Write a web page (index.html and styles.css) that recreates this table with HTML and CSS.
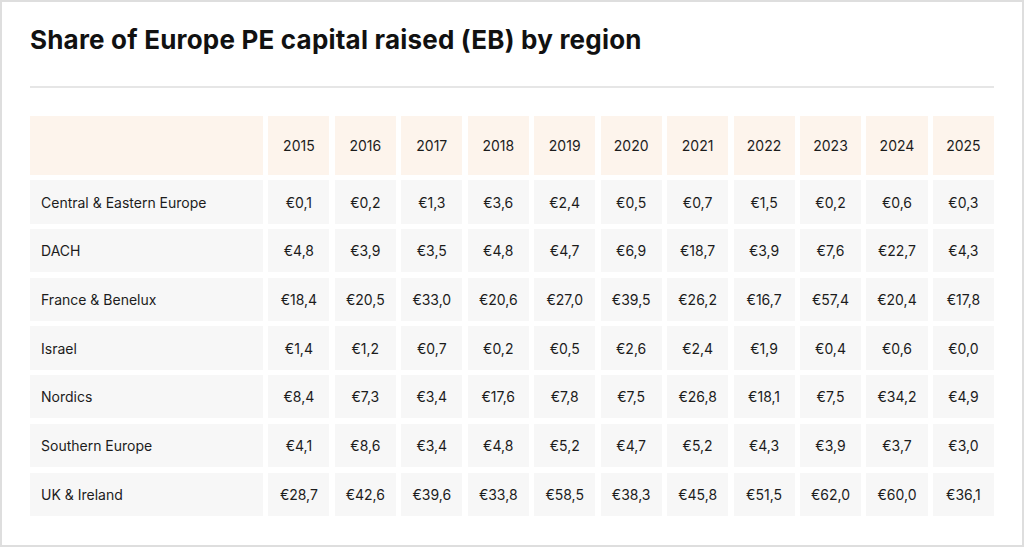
FILE: index.html
```html
<!DOCTYPE html>
<html lang="en">
<head>
<meta charset="utf-8">
<title>Share of Europe PE capital raised (EB) by region</title>
<link rel="stylesheet" href="styles.css">
</head>
<body>
<div class="card">
  <h1 class="title">Share of Europe PE capital raised (EB) by region</h1>
  <hr class="rule">
  <div class="table">
    <div class="head first"></div>
    <div class="head">2015</div><div class="head">2016</div><div class="head">2017</div><div class="head">2018</div><div class="head">2019</div><div class="head">2020</div><div class="head">2021</div><div class="head">2022</div><div class="head">2023</div><div class="head">2024</div><div class="head">2025</div>

    <div class="cell first">Central &amp; Eastern Europe</div>
    <div class="cell">€0,1</div><div class="cell">€0,2</div><div class="cell">€1,3</div><div class="cell">€3,6</div><div class="cell">€2,4</div><div class="cell">€0,5</div><div class="cell">€0,7</div><div class="cell">€1,5</div><div class="cell">€0,2</div><div class="cell">€0,6</div><div class="cell">€0,3</div>

    <div class="cell first">DACH</div>
    <div class="cell">€4,8</div><div class="cell">€3,9</div><div class="cell">€3,5</div><div class="cell">€4,8</div><div class="cell">€4,7</div><div class="cell">€6,9</div><div class="cell">€18,7</div><div class="cell">€3,9</div><div class="cell">€7,6</div><div class="cell">€22,7</div><div class="cell">€4,3</div>

    <div class="cell first">France &amp; Benelux</div>
    <div class="cell">€18,4</div><div class="cell">€20,5</div><div class="cell">€33,0</div><div class="cell">€20,6</div><div class="cell">€27,0</div><div class="cell">€39,5</div><div class="cell">€26,2</div><div class="cell">€16,7</div><div class="cell">€57,4</div><div class="cell">€20,4</div><div class="cell">€17,8</div>

    <div class="cell first">Israel</div>
    <div class="cell">€1,4</div><div class="cell">€1,2</div><div class="cell">€0,7</div><div class="cell">€0,2</div><div class="cell">€0,5</div><div class="cell">€2,6</div><div class="cell">€2,4</div><div class="cell">€1,9</div><div class="cell">€0,4</div><div class="cell">€0,6</div><div class="cell">€0,0</div>

    <div class="cell first">Nordics</div>
    <div class="cell">€8,4</div><div class="cell">€7,3</div><div class="cell">€3,4</div><div class="cell">€17,6</div><div class="cell">€7,8</div><div class="cell">€7,5</div><div class="cell">€26,8</div><div class="cell">€18,1</div><div class="cell">€7,5</div><div class="cell">€34,2</div><div class="cell">€4,9</div>

    <div class="cell first">Southern Europe</div>
    <div class="cell">€4,1</div><div class="cell">€8,6</div><div class="cell">€3,4</div><div class="cell">€4,8</div><div class="cell">€5,2</div><div class="cell">€4,7</div><div class="cell">€5,2</div><div class="cell">€4,3</div><div class="cell">€3,9</div><div class="cell">€3,7</div><div class="cell">€3,0</div>

    <div class="cell first">UK &amp; Ireland</div>
    <div class="cell">€28,7</div><div class="cell">€42,6</div><div class="cell">€39,6</div><div class="cell">€33,8</div><div class="cell">€58,5</div><div class="cell">€38,3</div><div class="cell">€45,8</div><div class="cell">€51,5</div><div class="cell">€62,0</div><div class="cell">€60,0</div><div class="cell">€36,1</div>
  </div>
</div>
</body>
</html>
```

FILE: styles.css
```css
html, body {
  margin: 0;
  padding: 0;
  background: #ffffff;
}

body {
  font-family: Inter, Lato, "Noto Sans", sans-serif;
  color: #1c1c1c;
}

.card {
  box-sizing: border-box;
  width: 1024px;
  height: 547px;
  border: 2px solid #dedede;
  padding: 0 28px 0 28px;
  background: #fff;
}

.title {
  margin: 0;
  padding-top: 22px;
  font-size: 26px;
  line-height: 32px;
  font-weight: 700;
  color: #111111;
  letter-spacing: 0.2px;
}

.rule {
  margin: 30px 0 0 0;
  border: 0;
  height: 2px;
  background: #e6e6e6;
  width: 964px;
}

.table {
  margin-top: 28px;
  width: 964px;
  display: grid;
  grid-template-columns: 233px repeat(11, 1fr);
  grid-template-rows: 59px repeat(7, 43.3px);
  column-gap: 5.33px;
  row-gap: 5.4px;
  font-size: 14px;
}

.head {
  background: #fdf4ec;
  display: flex;
  align-items: center;
  justify-content: center;
}

.cell {
  background: #f7f7f7;
  display: flex;
  align-items: center;
  justify-content: center;
}

.cell.first {
  justify-content: flex-start;
  padding-left: 11px;
}
```
